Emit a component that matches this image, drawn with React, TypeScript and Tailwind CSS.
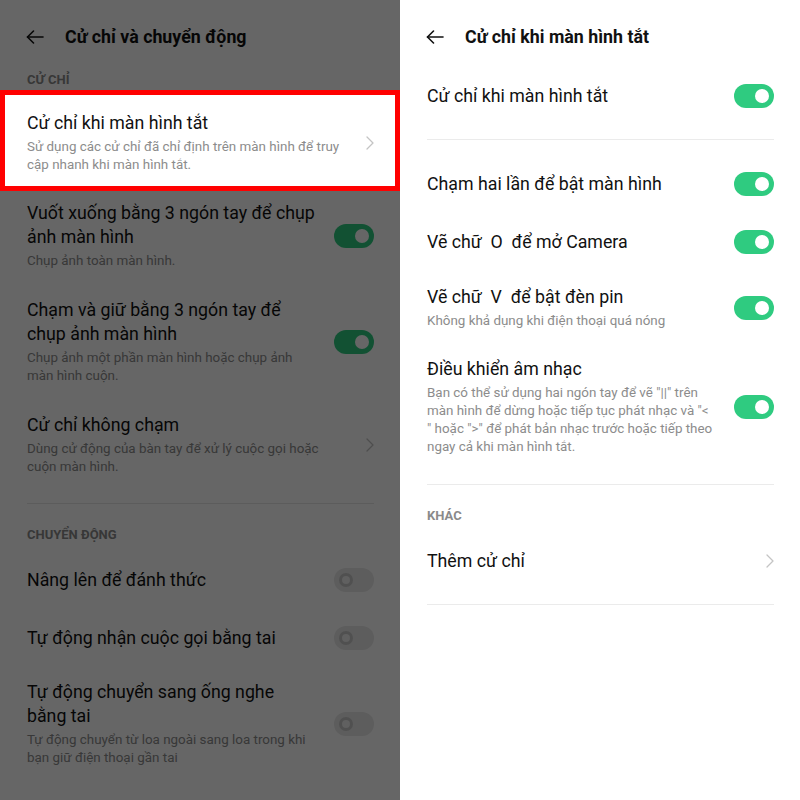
import type { ReactNode } from "react";

function BackArrow() {
  return (
    <svg width="18" height="14" viewBox="0 0 18 14" fill="none" stroke="#111" strokeWidth={1.6} strokeLinecap="round" strokeLinejoin="round">
      <path d="M17 7H1.5" />
      <path d="M7.5 1L1.5 7l6 6" />
    </svg>
  );
}

function Chevron() {
  return (
    <svg width="8" height="14" viewBox="0 0 8 14" fill="none" stroke="#c4c4c4" strokeWidth={1.3} strokeLinecap="round" strokeLinejoin="round" className="shrink-0">
      <path d="M1 1l6 6-6 6" />
    </svg>
  );
}

function Toggle({ on }: { on: boolean }) {
  if (on) {
    return (
      <div className="flex h-6 w-10 shrink-0 items-center justify-end rounded-full bg-[#2fcb80] px-[5px]">
        <div className="h-[14px] w-[14px] rounded-full bg-white" />
      </div>
    );
  }
  return (
    <div className="flex h-6 w-10 shrink-0 items-center justify-start rounded-full bg-[#e8e8e8] px-[5px]">
      <div className="h-[14px] w-[14px] rounded-full border-[3px] border-[#c8c8c8] bg-[#efefef]" />
    </div>
  );
}

function Row({
  title,
  sub,
  right,
  className,
}: {
  title: string[];
  sub?: string[];
  right: ReactNode;
  className: string;
}) {
  return (
    <div className={`flex items-center justify-between ${className}`}>
      <div>
        {title.map((l) => (
          <div key={l} className="whitespace-pre text-[17.75px] leading-[24px] text-[#111]">
            {l}
          </div>
        ))}
        {sub && (
          <div className="mt-[3px]">
            {sub.map((l) => (
              <div key={l} className="whitespace-pre text-[13.4px] leading-[18px] text-[#8c8c8c]">
                {l}
              </div>
            ))}
          </div>
        )}
      </div>
      {right}
    </div>
  );
}

function Header({ title }: { title: string }) {
  return (
    <div className="flex h-[74px] items-center pl-[26px]">
      <BackArrow />
      <div className="ml-[21px] text-[17.8px] font-bold text-[#111]">{title}</div>
    </div>
  );
}

function SectionLabel({ text, className }: { text: string; className: string }) {
  return (
    <div className={`h-4 px-[27px] text-[13px] font-bold leading-4 text-[#8a8a8a] ${className}`}>{text}</div>
  );
}

export default function App() {
  return (
    <div className="flex h-[800px] w-[800px] font-['Roboto',sans-serif]">
      {/* Left: previous screen dimmed */}
      <div className="relative h-[800px] w-[400px] overflow-hidden bg-white">
        <Header title="Cử chỉ và chuyển động" />
        <SectionLabel text="CỬ CHỈ" className="-mt-0.5" />

        {/* highlighted item */}
        <div className="relative z-10 mt-[2px] border-[5px] border-[#ff0000] bg-white pl-[22px] pr-[21px]">
          <Row
            className="pt-[16px] pb-[12px]"
            title={["Cử chỉ khi màn hình tắt"]}
            sub={["Sử dụng các cử chỉ đã chỉ định trên màn hình để truy", "cập nhanh khi màn hình tắt."]}
            right={<Chevron />}
          />
        </div>

        <div className="pl-[27px] pr-[26px]">
          <Row
            className="pt-[10px] pb-[14px]"
            title={["Vuốt xuống bằng 3 ngón tay để chụp", "ảnh màn hình"]}
            sub={["Chụp ảnh toàn màn hình."]}
            right={<Toggle on />}
          />
          <Row
            className="py-[14px]"
            title={["Chạm và giữ bằng 3 ngón tay để", "chụp ảnh màn hình"]}
            sub={["Chụp ảnh một phần màn hình hoặc chụp ảnh", "màn hình cuộn."]}
            right={<Toggle on />}
          />
          <Row
            className="pt-[14px] pb-[27px]"
            title={["Cử chỉ không chạm"]}
            sub={["Dùng cử động của bàn tay để xử lý cuộc gọi hoặc", "cuộn màn hình."]}
            right={<Chevron />}
          />
          <div className="h-px bg-[#e6e6e6]" />
        </div>

        <SectionLabel text="CHUYỂN ĐỘNG" className="mt-[23px] mb-[8px]" />

        <div className="pl-[27px] pr-[26px]">
          <Row className="h-[58px]" title={["Nâng lên để đánh thức"]} right={<Toggle on={false} />} />
          <Row className="h-[58px]" title={["Tự động nhận cuộc gọi bằng tai"]} right={<Toggle on={false} />} />
          <Row
            className="py-[13px]"
            title={["Tự động chuyển sang ống nghe", "bằng tai"]}
            sub={["Tự động chuyển từ loa ngoài sang loa trong khi", "bạn giữ điện thoại gần tai"]}
            right={<Toggle on={false} />}
          />
        </div>

        <div className="absolute inset-0 bg-black/60" />
      </div>

      {/* Right: current screen */}
      <div className="h-[800px] w-[400px] bg-white">
        <Header title="Cử chỉ khi màn hình tắt" />
        <div className="pl-[27px] pr-[26px]">
          <Row className="pt-[10px] pb-[31px]" title={["Cử chỉ khi màn hình tắt"]} right={<Toggle on />} />
          <div className="h-px bg-[#ebebeb]" />

          <div className="pt-[15px]">
            <Row className="h-[58px]" title={["Chạm hai lần để bật màn hình"]} right={<Toggle on />} />
            <Row className="h-[58px]" title={["Vẽ chữ  O  để mở Camera"]} right={<Toggle on />} />
            <Row
              className="py-[14px]"
              title={["Vẽ chữ  V  để bật đèn pin"]}
              sub={["Không khả dụng khi điện thoại quá nóng"]}
              right={<Toggle on />}
            />
            <Row
              className="pt-[13px] pb-[28px]"
              title={["Điều khiển âm nhạc"]}
              sub={[
                'Bạn có thể sử dụng hai ngón tay để vẽ "||" trên',
                'màn hình để dừng hoặc tiếp tục phát nhạc và "<',
                '" hoặc ">" để phát bản nhạc trước hoặc tiếp theo',
                "ngay cả khi màn hình tắt.",
              ]}
              right={<Toggle on />}
            />
          </div>
          <div className="h-px bg-[#ebebeb]" />
        </div>

        <SectionLabel text="KHÁC" className="mt-[23px] mb-[8px]" />

        <div className="pl-[27px] pr-[26px]">
          <Row className="h-[58px]" title={["Thêm cử chỉ"]} right={<Chevron />} />
          <div className="mt-[14px] h-px bg-[#ebebeb]" />
        </div>
      </div>
    </div>
  );
}
